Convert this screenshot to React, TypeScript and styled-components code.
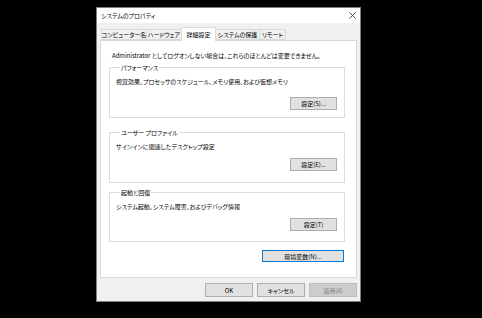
import React from "react";
import styled, { createGlobalStyle } from "styled-components";

const GlobalStyle = createGlobalStyle`
  html, body { margin: 0; padding: 0; background: #000; }
  body {
    width: 482px; height: 318px; overflow: hidden;
    font-family: "Noto Sans CJK JP", "Noto Sans", sans-serif;
    font-feature-settings: "palt";
    font-size: 6px;
    line-height: 9px;
    color: #000;
  }
  * { box-sizing: border-box; }
`;

const Screen = styled.div`
  padding: 7px 0 0 96px;
`;

const Window = styled.div`
  width: 265px;
  height: 295px;
  border: 1px solid #7f7f7f;
  background: #f0f0f0;
  display: flex;
  flex-direction: column;
`;

const TitleBar = styled.div`
  height: 15px;
  background: #fff;
  display: flex;
  align-items: center;
  justify-content: space-between;
  padding: 0 4px 0 4px;
`;

const Title = styled.span`
  font-size: 6px;
`;

const Close = styled.svg`
  width: 7px;
  height: 7px;
  display: block;
`;

const Body = styled.div`
  flex: 1;
  display: flex;
  flex-direction: column;
  padding: 4px 3px 4px 3px;
`;

const TabStrip = styled.div`
  display: flex;
  height: 13px;
  padding-left: 1px;
  align-items: flex-end;
`;

const Tab = styled.div<{ $active?: boolean; $w: number }>`
  width: ${(p) => p.$w}px;
  height: ${(p) => (p.$active ? 14 : 11)}px;
  margin-bottom: ${(p) => (p.$active ? -1 : 0)}px;
  background: ${(p) => (p.$active ? "#fff" : "#f0f0f0")};
  border: 1px solid #d9d9d9;
  border-bottom: ${(p) => (p.$active ? "none" : "1px solid #d9d9d9")};
  margin-left: -1px;
  display: flex;
  align-items: ${(p) => (p.$active ? "flex-start" : "center")};
  padding-top: ${(p) => (p.$active ? 2 : 0)}px;
  justify-content: center;
  position: relative;
  z-index: ${(p) => (p.$active ? 2 : 1)};
  font-size: 6px;
  white-space: nowrap;
  &:first-child { margin-left: 0; }
`;

const Panel = styled.div`
  height: 238px;
  background: #fff;
  border: 1px solid #d9d9d9;
  padding: 10px 11px 0 8px;
  display: flex;
  flex-direction: column;
`;

const Notice = styled.div`
  padding-left: 3px;
  white-space: nowrap;
`;

const Group = styled.fieldset<{ $mt: number; $h: number }>`
  margin: ${(p) => p.$mt}px 0 0 0;
  height: ${(p) => p.$h}px;
  border: 1px solid #dcdcdc;
  padding: 0 7px 0 6px;
  min-width: 0;
`;

const Legend = styled.legend`
  padding: 0 1px;
  margin-left: 4px;
  font-size: 6px;
  line-height: 9px;
`;

const Description = styled.div`
  margin-top: 5px;
  white-space: nowrap;
`;

const ButtonRow = styled.div<{ $mt: number }>`
  display: flex;
  justify-content: flex-end;
  margin-top: ${(p) => p.$mt}px;
`;

const Button = styled.button<{ $w: number; $h?: number; $focused?: boolean }>`
  width: ${(p) => p.$w}px;
  height: ${(p) => p.$h ?? 13}px;
  padding: 0;
  margin: 0;
  background: #e1e1e1;
  border: 1px solid ${(p) => (p.$focused ? "#0078d7" : "#adadad")};
  font-family: inherit;
  font-feature-settings: "palt";
  font-size: 6px;
  line-height: 9px;
  color: #000;
  display: flex;
  align-items: center;
  justify-content: center;
  &:disabled {
    background: #cccccc;
    border-color: #bfbfbf;
    color: #838383;
  }
`;

const EnvRow = styled.div`
  display: flex;
  justify-content: flex-end;
  margin-top: 8px;
  padding-right: 1px;
`;

const Footer = styled.div`
  display: flex;
  justify-content: flex-end;
  gap: 4px;
  margin-top: 5px;
`;

export default function App() {
  return (
    <>
      <GlobalStyle />
      <Screen>
        <Window>
          <TitleBar>
            <Title>システムのプロパティ</Title>
            <Close viewBox="0 0 7 7">
              <path d="M0.5 0.5 L6.5 6.5 M6.5 0.5 L0.5 6.5" stroke="#222" strokeWidth="0.8" fill="none" />
            </Close>
          </TitleBar>
          <Body>
            <TabStrip>
              <Tab $w={46}>コンピューター名</Tab>
              <Tab $w={36}>ハードウェア</Tab>
              <Tab $w={35} $active>詳細設定</Tab>
              <Tab $w={45}>システムの保護</Tab>
              <Tab $w={27}>リモート</Tab>
            </TabStrip>
            <Panel>
              <Notice>Administrator としてログオンしない場合は、これらのほとんどは変更できません。</Notice>
              <Group $mt={3} $h={55}>
                <Legend>パフォーマンス</Legend>
                <Description>視覚効果、プロセッサのスケジュール、メモリ使用、および仮想メモリ</Description>
                <ButtonRow $mt={11}>
                  <Button $w={47}>設定(S)...</Button>
                </ButtonRow>
              </Group>
              <Group $mt={10} $h={55}>
                <Legend>ユーザー プロファイル</Legend>
                <Description>サインインに関連したデスクトップ設定</Description>
                <ButtonRow $mt={7}>
                  <Button $w={47}>設定(E)...</Button>
                </ButtonRow>
              </Group>
              <Group $mt={5} $h={54}>
                <Legend>起動と回復</Legend>
                <Description>システム起動、システム障害、およびデバッグ情報</Description>
                <ButtonRow $mt={7}>
                  <Button $w={47}>設定(T)</Button>
                </ButtonRow>
              </Group>
              <EnvRow>
                <Button $w={82} $h={12} $focused>環境変数(N)...</Button>
              </EnvRow>
            </Panel>
            <Footer>
              <Button $w={48} $h={14}>OK</Button>
              <Button $w={48} $h={14}>キャンセル</Button>
              <Button $w={48} $h={14} disabled>適用(A)</Button>
            </Footer>
          </Body>
        </Window>
      </Screen>
    </>
  );
}
